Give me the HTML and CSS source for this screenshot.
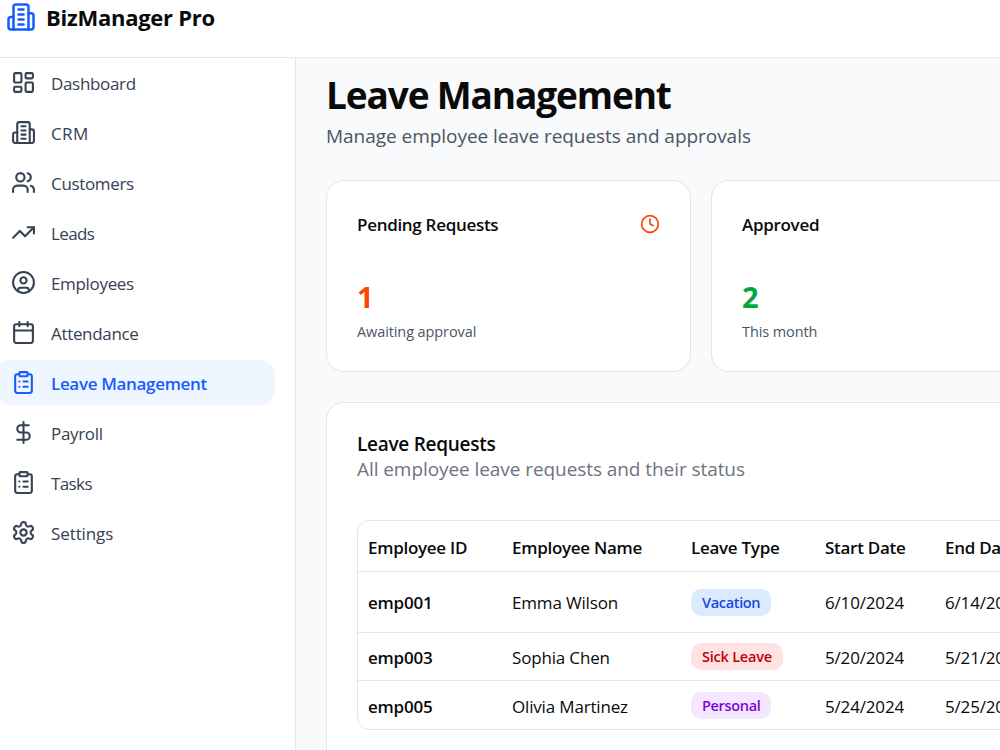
FILE: index.html
```html
<!DOCTYPE html>
<html lang="en">
<head>
    <meta charset="UTF-8">
    <meta name="viewport" content="width=device-width, initial-scale=1.0">
    <title>BizManager Pro - Leave Management</title>
    <link rel="stylesheet" href="styles.css">
</head>
<body>
    <header class="topbar">
        <svg class="icon logo" viewBox="0 0 24 24"><path d="M6 22V4a2 2 0 0 1 2-2h8a2 2 0 0 1 2 2v18Z"/><path d="M6 12H4a2 2 0 0 0-2 2v6a2 2 0 0 0 2 2h2"/><path d="M18 9h2a2 2 0 0 1 2 2v9a2 2 0 0 1-2 2h-2"/><path d="M10 6h4"/><path d="M10 10h4"/><path d="M10 14h4"/><path d="M10 18h4"/></svg>
        <span class="brand">BizManager Pro</span>
    </header>

    <div class="layout">
        <nav class="sidebar">
            <a class="nav-item" href="#">
                <svg class="icon" viewBox="0 0 24 24"><rect width="7" height="9" x="3" y="3" rx="1"/><rect width="7" height="5" x="14" y="3" rx="1"/><rect width="7" height="9" x="14" y="12" rx="1"/><rect width="7" height="5" x="3" y="16" rx="1"/></svg>
                <span>Dashboard</span>
            </a>
            <a class="nav-item" href="#">
                <svg class="icon" viewBox="0 0 24 24"><path d="M6 22V4a2 2 0 0 1 2-2h8a2 2 0 0 1 2 2v18Z"/><path d="M6 12H4a2 2 0 0 0-2 2v6a2 2 0 0 0 2 2h2"/><path d="M18 9h2a2 2 0 0 1 2 2v9a2 2 0 0 1-2 2h-2"/><path d="M10 6h4"/><path d="M10 10h4"/><path d="M10 14h4"/><path d="M10 18h4"/></svg>
                <span class="caps">CRM</span>
            </a>
            <a class="nav-item" href="#">
                <svg class="icon" viewBox="0 0 24 24"><path d="M16 21v-2a4 4 0 0 0-4-4H6a4 4 0 0 0-4 4v2"/><circle cx="9" cy="7" r="4"/><path d="M22 21v-2a4 4 0 0 0-3-3.87"/><path d="M16 3.13a4 4 0 0 1 0 7.75"/></svg>
                <span>Customers</span>
            </a>
            <a class="nav-item" href="#">
                <svg class="icon" viewBox="0 0 24 24"><path d="M22 7 13.5 15.5 8.5 10.5 2 17"/><path d="M16 7h6v6"/></svg>
                <span class="tight">Leads</span>
            </a>
            <a class="nav-item" href="#">
                <svg class="icon" viewBox="0 0 24 24"><circle cx="12" cy="12" r="10"/><circle cx="12" cy="10" r="3"/><path d="M7 20.662V19a2 2 0 0 1 2-2h6a2 2 0 0 1 2 2v1.662"/></svg>
                <span>Employees</span>
            </a>
            <a class="nav-item" href="#">
                <svg class="icon" viewBox="0 0 24 24"><path d="M8 2v4"/><path d="M16 2v4"/><rect width="18" height="18" x="3" y="4" rx="2"/><path d="M3 10h18"/></svg>
                <span>Attendance</span>
            </a>
            <a class="nav-item active" href="#">
                <svg class="icon" viewBox="0 0 24 24"><rect width="8" height="4" x="8" y="2" rx="1"/><path d="M16 4h2a2 2 0 0 1 2 2v14a2 2 0 0 1-2 2H6a2 2 0 0 1-2-2V6a2 2 0 0 1 2-2h2"/><path d="M12 11h4"/><path d="M12 16h4"/><path d="M8 11h.01"/><path d="M8 16h.01"/></svg>
                <span>Leave Management</span>
            </a>
            <a class="nav-item" href="#">
                <svg class="icon" viewBox="0 0 24 24"><path d="M12 2v20"/><path d="M17 5H9.5a3.5 3.5 0 0 0 0 7h5a3.5 3.5 0 0 1 0 7H6"/></svg>
                <span>Payroll</span>
            </a>
            <a class="nav-item" href="#">
                <svg class="icon" viewBox="0 0 24 24"><rect width="8" height="4" x="8" y="2" rx="1"/><path d="M16 4h2a2 2 0 0 1 2 2v14a2 2 0 0 1-2 2H6a2 2 0 0 1-2-2V6a2 2 0 0 1 2-2h2"/><path d="M12 11h4"/><path d="M12 16h4"/><path d="M8 11h.01"/><path d="M8 16h.01"/></svg>
                <span class="tight">Tasks</span>
            </a>
            <a class="nav-item" href="#">
                <svg class="icon" viewBox="0 0 24 24"><path d="M12.22 2h-.44a2 2 0 0 0-2 2v.18a2 2 0 0 1-1 1.73l-.43.25a2 2 0 0 1-2 0l-.15-.08a2 2 0 0 0-2.73.73l-.22.38a2 2 0 0 0 .73 2.73l.15.1a2 2 0 0 1 1 1.72v.51a2 2 0 0 1-1 1.74l-.15.09a2 2 0 0 0-.73 2.73l.22.38a2 2 0 0 0 2.73.73l.15-.08a2 2 0 0 1 2 0l.43.25a2 2 0 0 1 1 1.73V20a2 2 0 0 0 2 2h.44a2 2 0 0 0 2-2v-.18a2 2 0 0 1 1-1.73l.43-.25a2 2 0 0 1 2 0l.15.08a2 2 0 0 0 2.73-.73l.22-.39a2 2 0 0 0-.73-2.73l-.15-.08a2 2 0 0 1-1-1.74v-.5a2 2 0 0 1 1-1.74l.15-.09a2 2 0 0 0 .73-2.73l-.22-.38a2 2 0 0 0-2.73-.73l-.15.08a2 2 0 0 1-2 0l-.43-.25a2 2 0 0 1-1-1.73V4a2 2 0 0 0-2-2z"/><circle cx="12" cy="12" r="3"/></svg>
                <span class="wide">Settings</span>
            </a>
        </nav>

        <main class="content">
            <h1>Leave Management</h1>
            <p class="subtitle">Manage employee leave requests and approvals</p>

            <div class="stats">
                <div class="card stat">
                    <div class="stat-head">
                        <h3>Pending Requests</h3>
                        <svg class="icon clock" viewBox="0 0 24 24"><circle cx="12" cy="12" r="10"/><path d="M12 6v6l4 2"/></svg>
                    </div>
                    <div class="stat-value orange">1</div>
                    <p class="stat-note">Awaiting approval</p>
                </div>
                <div class="card stat">
                    <div class="stat-head">
                        <h3>Approved</h3>
                    </div>
                    <div class="stat-value green">2</div>
                    <p class="stat-note">This month</p>
                </div>
            </div>

            <section class="card requests">
                <h2>Leave Requests</h2>
                <p class="description">All employee leave requests and their status</p>
                <div class="table-wrap">
                    <table>
                        <thead>
                            <tr>
                                <th class="col-id">Employee ID</th>
                                <th class="col-name">Employee Name</th>
                                <th class="col-type">Leave Type</th>
                                <th class="col-date">Start Date</th>
                                <th>End Date</th>
                            </tr>
                        </thead>
                        <tbody>
                            <tr class="row-tall">
                                <td class="emp-id">emp001</td>
                                <td>Emma Wilson</td>
                                <td><span class="badge vacation">Vacation</span></td>
                                <td>6/10/2024</td>
                                <td>6/14/2024</td>
                            </tr>
                            <tr>
                                <td class="emp-id">emp003</td>
                                <td>Sophia Chen</td>
                                <td><span class="badge sick">Sick Leave</span></td>
                                <td>5/20/2024</td>
                                <td>5/21/2024</td>
                            </tr>
                            <tr>
                                <td class="emp-id">emp005</td>
                                <td>Olivia Martinez</td>
                                <td><span class="badge personal">Personal</span></td>
                                <td>5/24/2024</td>
                                <td>5/25/2024</td>
                            </tr>
                        </tbody>
                    </table>
                </div>
            </section>
        </main>
    </div>
</body>
</html>
```
FILE: styles.css
```css
* {
    box-sizing: border-box;
    margin: 0;
    padding: 0;
}

body {
    height: 750px;
    overflow: hidden;
    font-family: "Open Sans", "Noto Sans", sans-serif;
    font-size: 17px;
    letter-spacing: -0.17px;
    color: #0a0a0a;
    background-color: #f9fafb;
}

.icon {
    width: 25px;
    height: 25px;
    flex-shrink: 0;
    fill: none;
    stroke: currentColor;
    stroke-width: 2;
    stroke-linecap: round;
    stroke-linejoin: round;
}

/* top bar */
.topbar {
    display: flex;
    gap: 10px;
    height: 58px;
    padding: 2px 6px;
    background-color: #fff;
    border-bottom: 1px solid #e5e7eb;
}

.logo {
    width: 30px;
    height: 30px;
    color: #155dfc;
}

.brand {
    font-size: 22px;
    font-weight: 700;
    line-height: 30px;
    letter-spacing: -0.26px;
}

.layout {
    display: flex;
    height: 692px;
}

/* sidebar */
.sidebar {
    display: flex;
    flex-direction: column;
    gap: 5px;
    width: 296px;
    flex-shrink: 0;
    padding-top: 2px;
    background-color: #fff;
    border-right: 1px solid #e5e7eb;
}

.nav-item {
    display: flex;
    align-items: center;
    gap: 15px;
    height: 45px;
    margin-left: -4px;
    margin-right: 20px;
    padding: 0 15px;
    border-radius: 15px;
    color: #364153;
    text-decoration: none;
    letter-spacing: -0.33px;
}

.nav-item span {
    padding-top: 2px;
}

.nav-item .caps {
    letter-spacing: 0.4px;
}

.nav-item .tight {
    letter-spacing: -0.6px;
}

.nav-item .wide {
    letter-spacing: -0.1px;
}

.nav-item.active {
    color: #155dfc;
    background-color: #eff6ff;
    font-weight: 600;
}

/* main area */
.content {
    flex: 1;
    min-width: 0;
    padding: 14px 0 0 30px;
}

h1 {
    font-size: 37px;
    font-weight: 700;
    line-height: 45px;
    letter-spacing: -1.13px;
}

.subtitle {
    margin-top: 4px;
    font-size: 19px;
    line-height: 30px;
    letter-spacing: -0.04px;
    color: #4a5565;
}

.card {
    background-color: #fff;
    border: 1px solid #e5e5e5;
    border-radius: 18px;
    padding: 30px;
}

.stats {
    display: grid;
    grid-template-columns: 365px 365px;
    gap: 20px;
    margin-top: 29px;
}

.stat {
    height: 192px;
}

.stat-head {
    display: flex;
    align-items: center;
    justify-content: space-between;
    height: 26px;
}

h3 {
    font-size: 17px;
    font-weight: 600;
    letter-spacing: -0.3px;
}

.clock {
    width: 20px;
    height: 20px;
    color: #f54900;
}

.stat-value {
    margin-top: 40px;
    font-size: 29px;
    font-weight: 700;
    line-height: 40px;
}

.orange {
    color: #f54900;
}

.green {
    color: #00a63e;
}

.stat-note {
    margin-top: 4px;
    font-size: 14.5px;
    line-height: 22px;
    letter-spacing: -0.1px;
    color: #4a5565;
}

/* requests card */
.requests {
    width: 1135px;
    height: 400px;
    margin-top: 30px;
}

h2 {
    padding-top: 1px;
    font-size: 19px;
    font-weight: 600;
    line-height: 20px;
    letter-spacing: -0.27px;
}

.description {
    font-size: 19px;
    line-height: 30px;
    letter-spacing: -0.07px;
    color: #717182;
}

.table-wrap {
    margin-top: 36px;
    border: 1px solid #e5e5e5;
    border-radius: 12px;
}

table {
    width: 100%;
    table-layout: fixed;
    border-collapse: separate;
    border-spacing: 0;
}

th, td {
    padding: 2px 10px 0;
    border-bottom: 1px solid #e5e5e5;
    text-align: left;
    white-space: nowrap;
}

th {
    height: 51px;
    font-weight: 600;
    letter-spacing: -0.28px;
}

td {
    height: 48px;
    line-height: 24px;
}

.row-tall td {
    height: 61px;
}

tbody tr:last-child td {
    padding-top: 4px;
    border-bottom: none;
}

.col-id {
    width: 144px;
}

.col-name {
    width: 179px;
}

.col-type {
    width: 134px;
}

.col-date {
    width: 120px;
}

.emp-id {
    font-weight: 600;
    letter-spacing: -0.2px;
}

.badge {
    display: block;
    width: fit-content;
    height: 27px;
    padding: 0 11px;
    margin-top: -3px;
    border-radius: 10px;
    font-size: 14.5px;
    font-weight: 600;
    line-height: 28px;
    letter-spacing: -0.33px;
}

.row-tall .badge {
    margin-top: -1px;
}

.vacation {
    color: #1447e6;
    background-color: #dbeafe;
}

.sick {
    color: #c10007;
    background-color: #ffe2e2;
    letter-spacing: -0.22px;
}

.personal {
    color: #8200db;
    background-color: #f3e8ff;
}
```
